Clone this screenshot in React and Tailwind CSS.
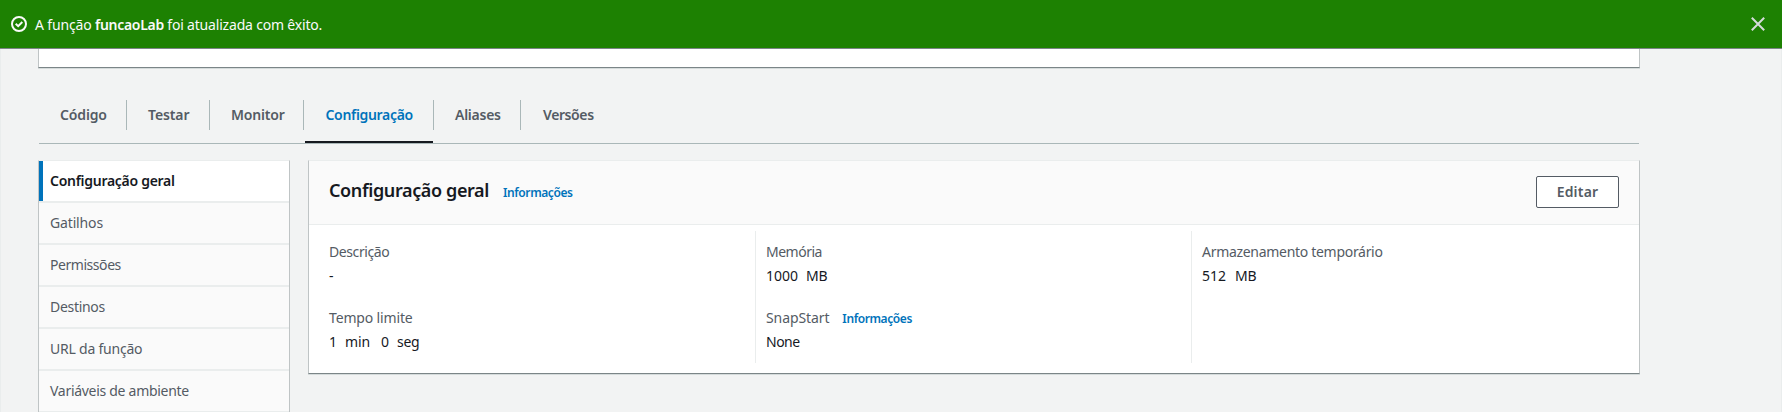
import React from "react";

const TABS = [
  { label: "Código", box: "w-[88px]", text: "tracking-[-0.15px]" },
  { label: "Testar", box: "w-[83px]", text: "tracking-[-0.1px]" },
  { label: "Monitor", box: "w-[94px]", text: "tracking-[-0.2px]" },
  { label: "Configuração", box: "w-[130px]", text: "tracking-[-0.32px]", active: true },
  { label: "Aliases", box: "w-[87px]", text: "tracking-[-0.25px]" },
  { label: "Versões", box: "w-[94px]", text: "pl-px tracking-[-0.4px]" },
];

const NAV = [
  { label: "Configuração geral", text: "tracking-[-0.28px]" },
  { label: "Gatilhos", text: "tracking-[-0.15px]" },
  { label: "Permissões", text: "tracking-[-0.45px]" },
  { label: "Destinos", text: "tracking-[-0.3px]" },
  { label: "URL da função", text: "tracking-[-0.22px]" },
  { label: "Variáveis de ambiente", text: "tracking-[-0.29px]" },
];

function InfoLink({ className }) {
  return (
    <a className={"text-[12px] font-semibold tracking-[-0.4px] text-[#0073bb] " + className}>
      Informações
    </a>
  );
}

function Field({ label, labelClass, info, children }) {
  return (
    <div className="h-[66px]">
      <div className="flex h-6 items-center text-[#545b64]">
        <span className={labelClass}>{label}</span>
        {info && <InfoLink className="ml-[13px] pt-px" />}
      </div>
      <div className="flex h-6 items-center text-[#16191f]">{children}</div>
    </div>
  );
}

function Banner() {
  return (
    <header className="relative z-10 flex h-12 shrink-0 items-center bg-[#1d8102] pl-[11px] pr-[17px] text-[#fafafa] shadow-[0_1px_0_0_#7b8587]">
      <svg className="mr-2 h-4 w-4 shrink-0" viewBox="0 0 16 16" fill="none" stroke="currentColor" strokeWidth="2">
        <circle cx="8" cy="8" r="7" />
        <path d="M4.7 7.7 7.2 10.2 11.3 6" />
      </svg>
      <p className="flex-1 whitespace-pre pt-px">
        <span className="tracking-[-0.15px]">A função </span>
        <b className="font-semibold tracking-[-0.3px]">funcaoLab</b>
        <span className="tracking-[-0.19px]"> foi atualizada com êxito.</span>
      </p>
      <svg className="h-[14px] w-[14px] text-[#d5dbdb]" viewBox="0 0 14 14" fill="none" stroke="currentColor" strokeWidth="2">
        <path d="M.8.8 13.2 13.2M13.2.8.8 13.2" />
      </svg>
    </header>
  );
}

function Tabs() {
  return (
    <nav className="flex h-11 border-b border-[#aab7b8]">
      {TABS.map((tab, i) => (
        <div key={tab.label} className={"flex " + tab.box}>
          <div
            className={
              "flex flex-1 justify-start border-b-2 font-semibold leading-[30px] " +
              (tab.active
                ? "ml-px border-[#16191f] pl-[20.5px] text-[#0073bb]"
                : "border-transparent pl-[21px] text-[#545b64]")
            }
          >
            <span className={tab.text}>{tab.label}</span>
          </div>
          {i < TABS.length - 1 && <i className="h-[30px] w-px bg-[#aab7b8]" />}
        </div>
      ))}
    </nav>
  );
}

function SideNav() {
  return (
    <aside className="mt-4 h-[252px] w-[252px] shrink-0 overflow-hidden border-x border-t border-x-[#bfc4c5] border-t-[#eaeded] bg-[#fafafa]">
      {NAV.map((item, i) => (
        <div
          key={item.label}
          className={
            "flex h-[42px] items-center border-b-2 border-[#eaeded] " +
            (i === 0 ? "bg-white font-semibold text-[#16191f]" : "text-[#545b64]")
          }
        >
          <i className={"h-full w-1 " + (i === 0 ? "bg-[#0073bb]" : "")} />
          <span className={"pl-[7px] " + item.text}>{item.label}</span>
        </div>
      ))}
    </aside>
  );
}

function GeneralPanel() {
  return (
    <section className="mt-4 flex h-[214px] flex-1 flex-col border border-x-[#bfc4c5] border-b-[#7b8587] border-t-[#eaeded] bg-white shadow-[0_1px_0_0_#d5dbdb]">
      <div className="flex h-16 shrink-0 items-start justify-between border-b border-[#eaeded] bg-[#fafafa] px-5 pt-[15px]">
        <h2 className="flex items-baseline pt-[2px]">
          <span className="text-[18px] font-semibold leading-6 tracking-[-0.38px] text-[#16191f]">Configuração geral</span>
          <InfoLink className="ml-[14px]" />
        </h2>
        <button className="h-8 w-[83px] rounded-[2px] border border-[#545b64] bg-white font-semibold leading-[30px] tracking-[0.2px] text-[#545b64]">
          Editar
        </button>
      </div>
      <div className="flex h-[138px] pt-[6px]">
        <div className="w-[446px] pl-5 pt-[9px]">
          <Field label="Descrição" labelClass="tracking-[-0.4px]">-</Field>
          <Field label="Tempo limite" labelClass="tracking-[-0.15px]">
            <span className="w-4">1</span>
            <span className="w-9 tracking-[-0.1px]">min</span>
            <span className="w-4">0</span>
            <span className="tracking-[-0.3px]">seg</span>
          </Field>
        </div>
        <div className="h-[132px] w-[436px] border-l border-[#eaeded] pl-[10px] pt-[9px]">
          <Field label="Memória" labelClass="tracking-[-0.5px]">
            <span className="w-10">1000</span>
            <span className="tracking-[-0.3px]">MB</span>
          </Field>
          <Field label="SnapStart" labelClass="tracking-[-0.1px]" info>
            <span className="tracking-[-0.5px]">None</span>
          </Field>
        </div>
        <div className="h-[132px] flex-1 border-l border-[#eaeded] pl-[10px] pt-[9px]">
          <Field label="Armazenamento temporário" labelClass="tracking-[-0.3px]">
            <span className="w-[33px]">512</span>
            <span className="tracking-[-0.3px]">MB</span>
          </Field>
        </div>
      </div>
    </section>
  );
}

export default function App() {
  return (
    <div className="flex h-[412px] w-[1782px] flex-col overflow-hidden bg-[#f2f3f3] font-['Noto_Sans',sans-serif] text-[14px] leading-[22px]">
      <Banner />
      <main className="flex-1 border-x border-[#eaeded] pl-[37px] pr-[141px]">
        <div className="h-5 border-x border-b border-x-[#bfc4c5] border-b-[#7b8587] bg-white shadow-[0_1px_0_0_#d5dbdb]" />
        <div className="ml-px mr-px pt-8">
          <Tabs />
        </div>
        <div className="flex gap-[18px]">
          <SideNav />
          <GeneralPanel />
        </div>
      </main>
    </div>
  );
}
